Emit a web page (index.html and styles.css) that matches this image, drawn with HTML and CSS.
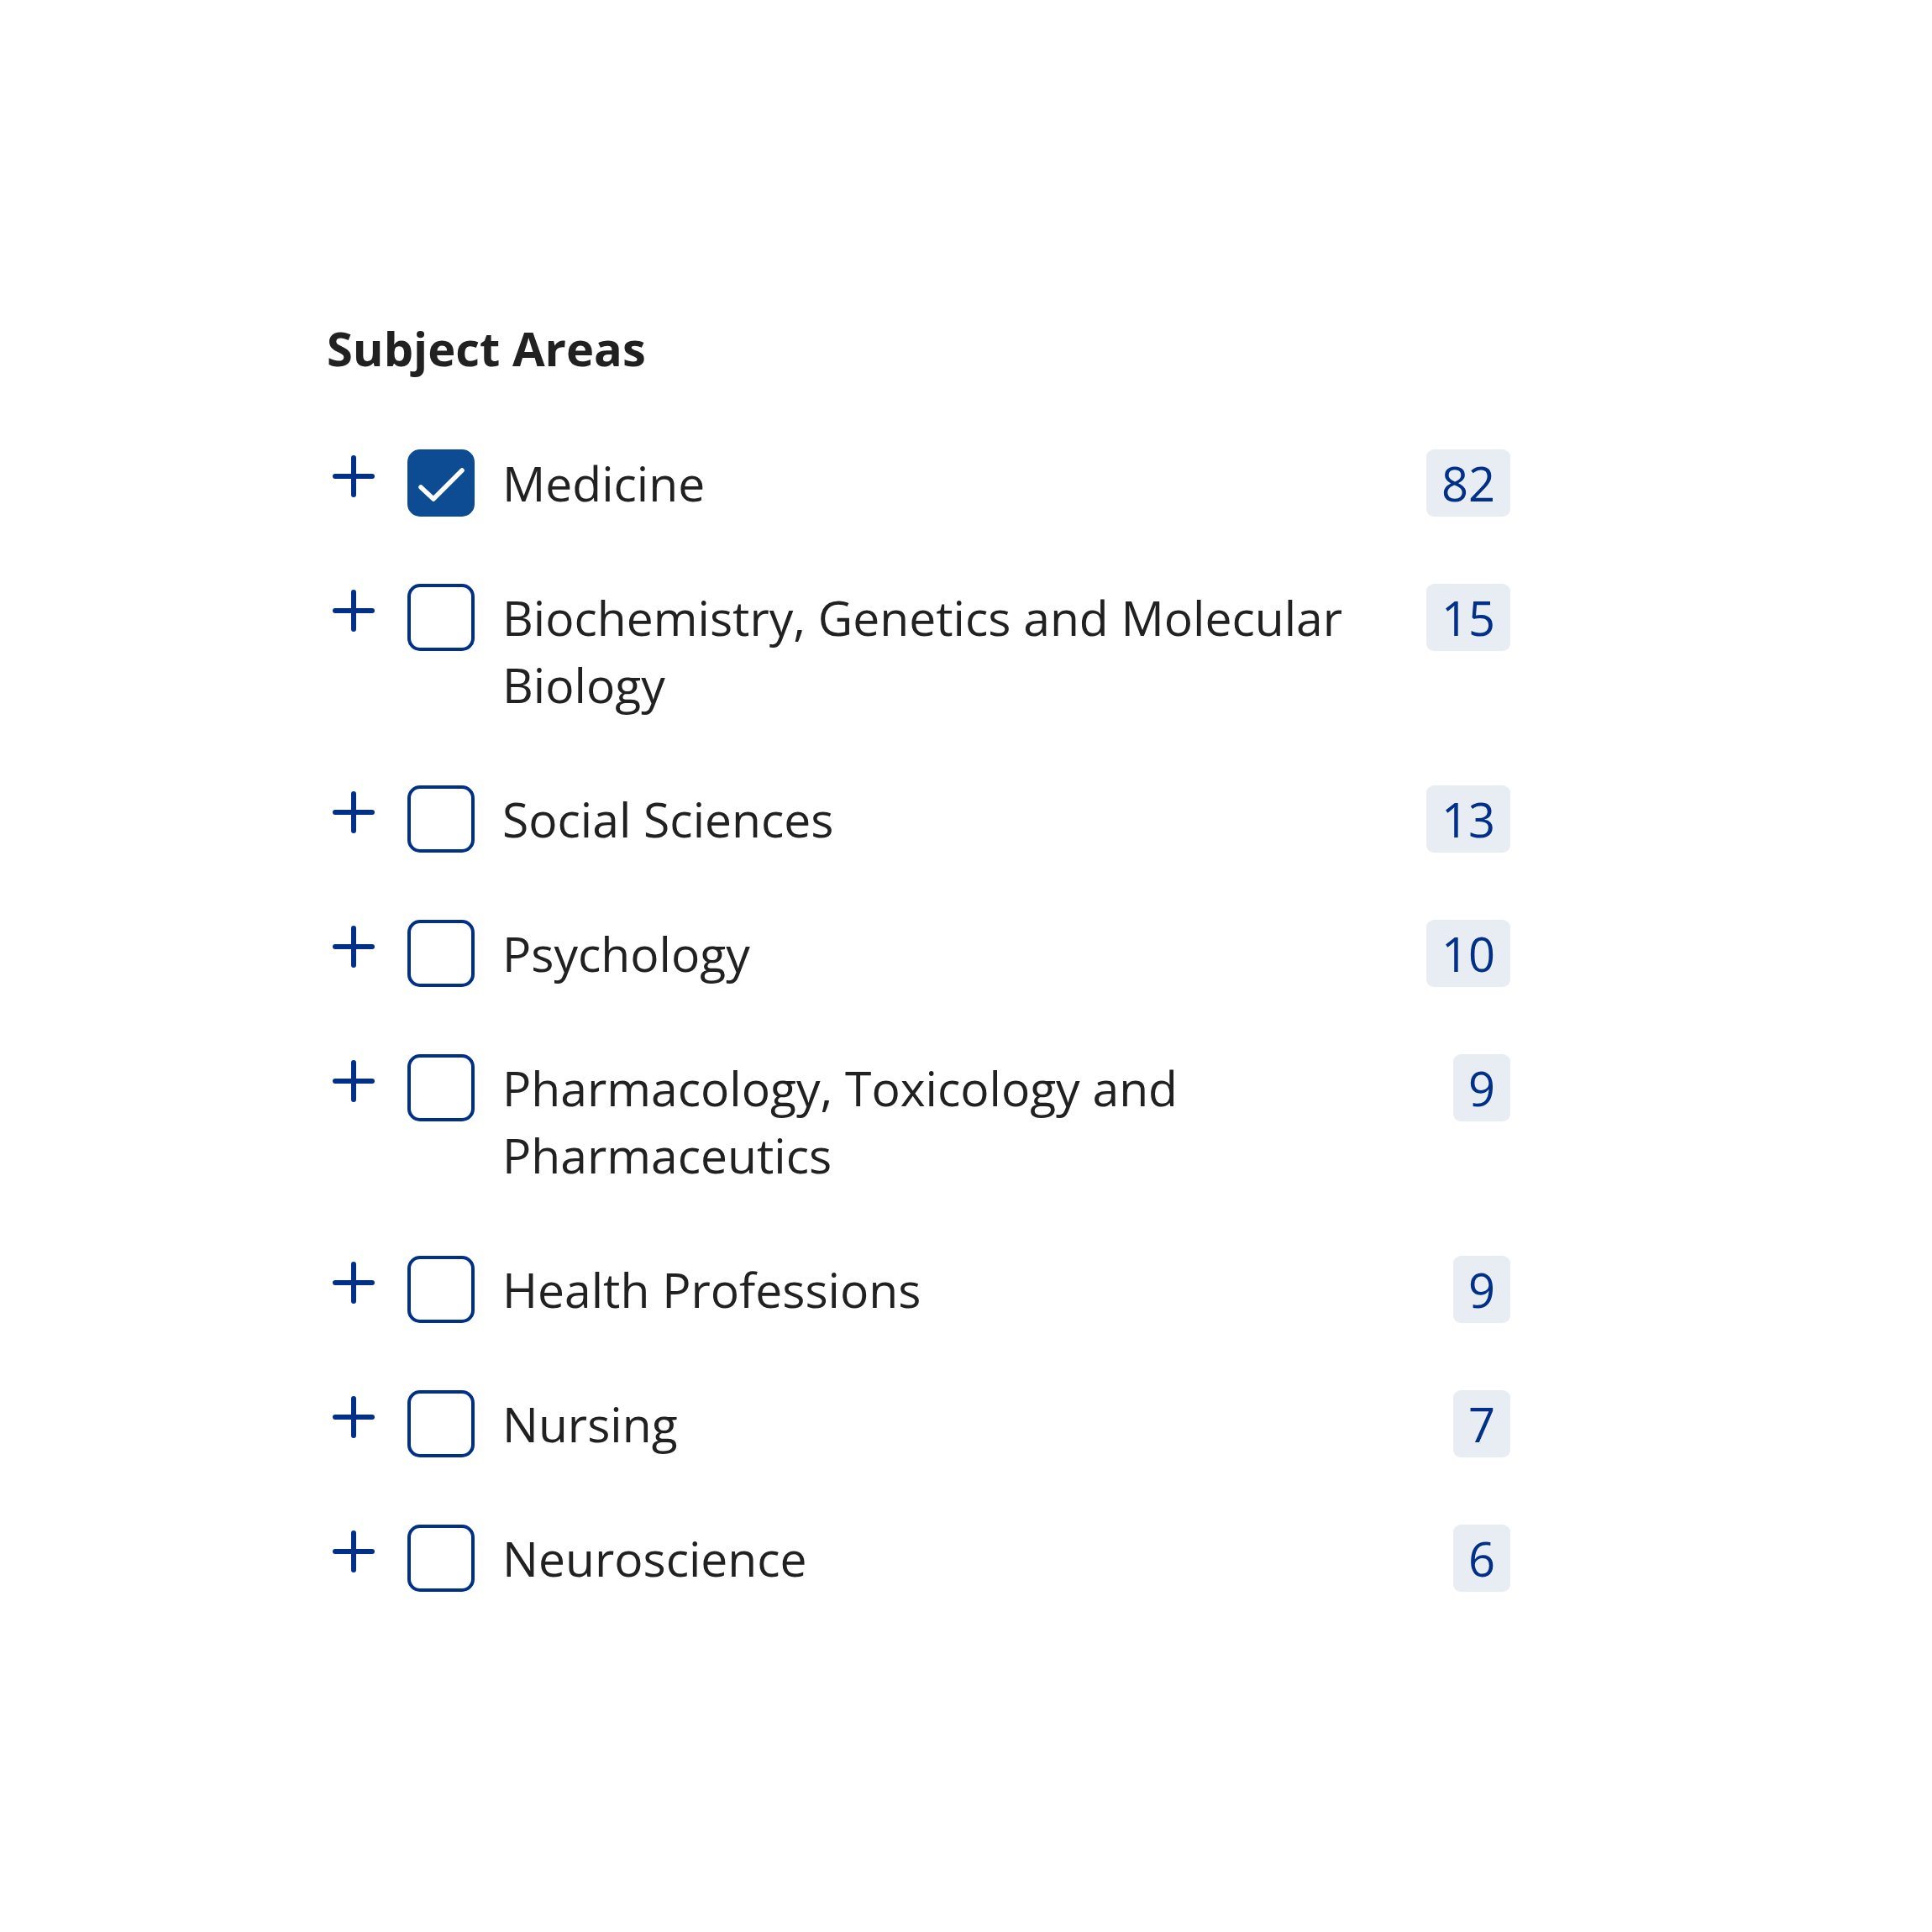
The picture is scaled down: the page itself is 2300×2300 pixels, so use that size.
FILE: index.html
```html
<!DOCTYPE html>
<html lang="en">
<head>
<meta charset="utf-8">
<title>Subject Areas</title>
<link rel="stylesheet" href="styles.css">
</head>
<body>
<section class="facet">
  <h2 class="facet-title">Subject Areas</h2>
  <ul class="facet-list">
    <li class="facet-row">
      <span class="toggle"><svg viewBox="0 0 64 64" width="64" height="64"><path d="M32 10V54M10 32H54" /></svg></span>
      <span class="box checked"><svg viewBox="0 0 80 80" width="80" height="80"><path d="M16 45L31 59L65 25" /></svg></span>
      <span class="label">Medicine</span>
      <span class="count">82</span>
    </li>
    <li class="facet-row">
      <span class="toggle"><svg viewBox="0 0 64 64" width="64" height="64"><path d="M32 10V54M10 32H54" /></svg></span>
      <span class="box"></span>
      <span class="label">Biochemistry, Genetics and Molecular Biology</span>
      <span class="count">15</span>
    </li>
    <li class="facet-row">
      <span class="toggle"><svg viewBox="0 0 64 64" width="64" height="64"><path d="M32 10V54M10 32H54" /></svg></span>
      <span class="box"></span>
      <span class="label">Social Sciences</span>
      <span class="count">13</span>
    </li>
    <li class="facet-row">
      <span class="toggle"><svg viewBox="0 0 64 64" width="64" height="64"><path d="M32 10V54M10 32H54" /></svg></span>
      <span class="box"></span>
      <span class="label">Psychology</span>
      <span class="count">10</span>
    </li>
    <li class="facet-row">
      <span class="toggle"><svg viewBox="0 0 64 64" width="64" height="64"><path d="M32 10V54M10 32H54" /></svg></span>
      <span class="box"></span>
      <span class="label">Pharmacology, Toxicology and Pharmaceutics</span>
      <span class="count">9</span>
    </li>
    <li class="facet-row">
      <span class="toggle"><svg viewBox="0 0 64 64" width="64" height="64"><path d="M32 10V54M10 32H54" /></svg></span>
      <span class="box"></span>
      <span class="label">Health Professions</span>
      <span class="count">9</span>
    </li>
    <li class="facet-row">
      <span class="toggle"><svg viewBox="0 0 64 64" width="64" height="64"><path d="M32 10V54M10 32H54" /></svg></span>
      <span class="box"></span>
      <span class="label">Nursing</span>
      <span class="count">7</span>
    </li>
    <li class="facet-row">
      <span class="toggle"><svg viewBox="0 0 64 64" width="64" height="64"><path d="M32 10V54M10 32H54" /></svg></span>
      <span class="box"></span>
      <span class="label">Neuroscience</span>
      <span class="count">6</span>
    </li>
  </ul>
</section>
</body>
</html>
```
FILE: styles.css
```css
html, body {
  margin: 0;
  padding: 0;
  background: #ffffff;
}

body {
  font-family: "Open Sans", "Noto Sans", sans-serif;
  color: #212121;
}

.facet {
  width: 1409px;
  padding: 374px 0 0 389px;
}

.facet-title {
  margin: 0 0 81px 0;
  font-size: 56px;
  line-height: 80px;
  font-weight: 700;
  color: #212121;
}

.facet-list {
  list-style: none;
  margin: 0;
  padding: 0;
  display: flex;
  flex-direction: column;
  gap: 80px;
}

.facet-row {
  display: grid;
  grid-template-columns: 64px 112px 1fr auto;
  align-items: start;
}

.toggle {
  width: 64px;
  height: 64px;
  display: block;
}

.toggle svg {
  display: block;
  fill: none;
  stroke: #003087;
  stroke-width: 6;
  stroke-linecap: round;
}

.box {
  box-sizing: border-box;
  width: 80px;
  height: 80px;
  border: 4px solid #003087;
  border-radius: 15px;
  background: #ffffff;
  display: block;
  position: relative;
  margin-left: 32px;
}

.box.checked {
  background: #0d4c93;
  border-color: #0d4c93;
}

.box svg {
  position: absolute;
  left: -4px;
  top: -4px;
  fill: none;
  stroke: #ffffff;
  stroke-width: 5.5;
  stroke-linecap: round;
  stroke-linejoin: round;
}

.label {
  font-size: 57px;
  line-height: 80px;
  padding-left: 33px;
  padding-right: 60px;
  color: #212121;
}

.count {
  font-size: 56px;
  line-height: 80px;
  height: 80px;
  padding: 0 18px;
  border-radius: 9px;
  background: #e8edf4;
  color: #003087;
}
```
